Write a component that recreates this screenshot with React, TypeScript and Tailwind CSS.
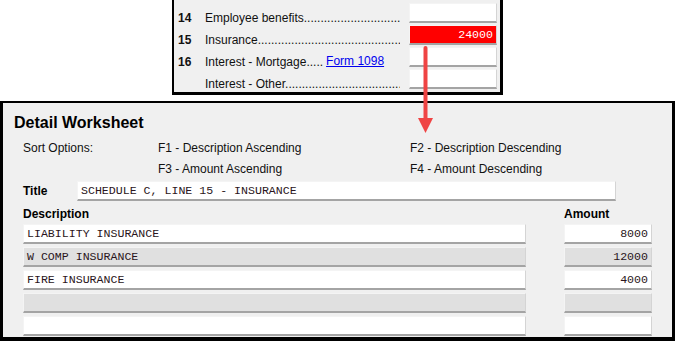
import React from 'react';

const mono = "font-['Liberation_Mono','Courier_New',monospace] text-[11.6px] text-[#2a1520]";
const dots = '.'.repeat(90);

type FieldProps = { value?: string; gray?: boolean; red?: boolean; right?: boolean; className?: string };

const Field: React.FC<FieldProps> = ({ value, gray, red, right, className }) => {
  const fill = red ? 'bg-[#ff0000] text-white' : gray ? 'bg-[#e0e0e0]' : 'bg-white';
  return (
    <div
      className={`flex items-center h-[20px] px-[3px] border-t border-l border-t-[#f4f4f4] border-l-[#f4f4f4] border-r border-r-[#d4d4d4] border-b-2 border-b-[#a4a4a4] ${fill} ${right ? 'justify-end' : ''} ${className ?? ''}`}>
      <span className={`${mono} ${red ? 'text-white' : ''} whitespace-pre leading-none`}>{value}</span>
    </div>
  );
};

type LineProps = { num?: string; label: string; extra?: React.ReactNode; value?: string; red?: boolean };

const LineRow: React.FC<LineProps> = ({ num, label, extra, value, red }) => (
  <div className="flex items-start h-[20px]">
    <span className="w-[27px] mt-[8px] font-bold">{num}</span>
    <div className="flex-1 flex items-center mt-[8px] overflow-hidden whitespace-nowrap mr-[9px]">
      <span className={extra ? '' : 'overflow-hidden'}>
        {label}
        {extra ? '.....' : dots}
      </span>
      {extra}
    </div>
    <Field value={value} red={red} right className="w-[88px]" />
  </div>
);

const rows = [
  { desc: 'LIABILITY INSURANCE', amount: '8000' },
  { desc: 'W COMP INSURANCE', amount: '12000' },
  { desc: 'FIRE INSURANCE', amount: '4000' },
  { desc: '', amount: '' },
  { desc: '', amount: '' },
];

export default function App() {
  return (
    <div className="relative w-[675px] h-[341px] bg-white overflow-hidden font-['Liberation_Sans',Arial,sans-serif] text-[12px] leading-[14px] text-[#111]">
      {/* line items from the schedule */}
      <div className="ml-[172px] w-[331px] h-[95px] flex flex-col gap-[2px] pt-[3px] pl-[4px] pr-[3px] bg-[#f0f0f0] border-l-2 border-r-[3px] border-b-[3px] border-black">
        <LineRow num="14" label="Employee benefits" />
        <LineRow num="15" label="Insurance" value="24000" red />
        <LineRow
          num="16"
          label="Interest - Mortgage"
          extra={
            <a className="ml-[3px] -mt-[3px] text-[#0000ee] underline cursor-pointer">Form 1098</a>
          }
        />
        <LineRow label="Interest - Other" />
      </div>

      {/* worksheet */}
      <div className="mt-[6px] h-[240px] pl-[11px] pt-[11px] bg-[#f0f0f0] border-t-2 border-l-[3px] border-r-[3px] border-b-4 border-black">
        <h1 className="text-[16px] leading-[18px] font-bold text-black">Detail Worksheet</h1>

        <div className="ml-[9px]">
          <div className="mt-[9px] grid grid-cols-[135px_252px_auto] gap-y-[7px]">
            <span>Sort Options:</span>
            <span>F1 - Description Ascending</span>
            <span>F2 - Description Descending</span>
            <span />
            <span>F3 - Amount Ascending</span>
            <span>F4 - Amount Descending</span>
          </div>

          <div className="mt-[5px] flex items-center">
            <span className="w-[54px] font-bold text-black">Title</span>
            <Field value="SCHEDULE C, LINE 15 - INSURANCE" className="w-[539px]" />
          </div>

          <div className="mt-[6px] flex gap-[38px] font-bold text-black">
            <span className="w-[503px]">Description</span>
            <span>Amount</span>
          </div>

          <div className="mt-[3px] flex flex-col gap-[3px]">
            {rows.map((r, i) => (
              <div key={i} className="flex gap-[38px]">
                <Field value={r.desc} gray={i % 2 === 1} className="w-[503px]" />
                <Field value={r.amount} gray={i % 2 === 1} right className="w-[88px]" />
              </div>
            ))}
          </div>
        </div>
      </div>

      {/* callout arrow */}
      <svg className="absolute left-[417px] top-[44px] w-[17px] h-[92px]" viewBox="0 0 17 92">
        <line x1="8.5" y1="4" x2="8.5" y2="76" stroke="#ef4444" strokeWidth="4" strokeLinecap="round" />
        <polygon points="1,74 16,74 8.5,89" fill="#ef4444" />
      </svg>
    </div>
  );
}
